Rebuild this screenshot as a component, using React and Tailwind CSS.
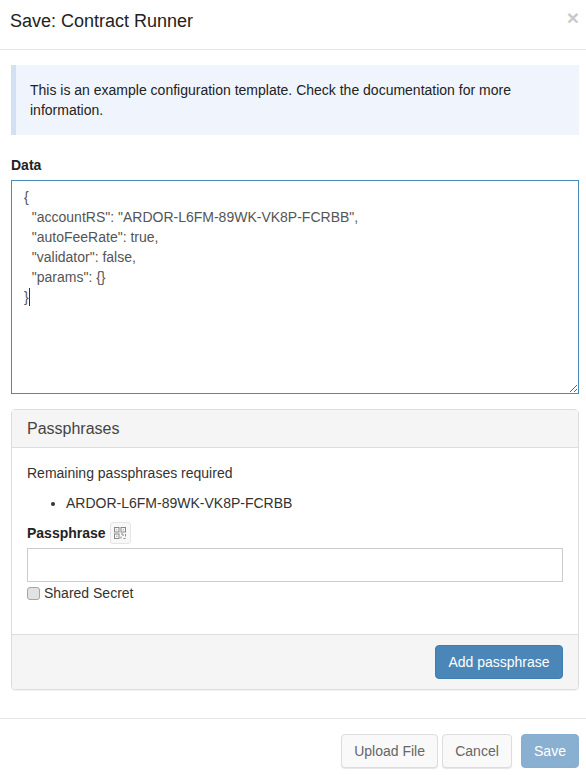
const template = `{
  "accountRS": "ARDOR-L6FM-89WK-VK8P-FCRBB",
  "autoFeeRate": true,
  "validator": false,
  "params": {}
}`;

// glyphicon style qr code, small squares plus a few data bits
function QrIcon() {
    return (
        <svg width="12" height="12" viewBox="0 0 12 12" className="text-[#888]" fill="none" stroke="currentColor">
            <rect x="0.5" y="0.5" width="4.5" height="4.5" />
            <rect x="7" y="0.5" width="4.5" height="4.5" />
            <rect x="0.5" y="7" width="4.5" height="4.5" />
            <path d="M7 7h2v2M7 9.5v2M9.5 11.5h2M11.5 7v2.5" />
            <path d="M2.25 2.75h1M8.75 2.75h1M2.25 9.25h1" />
        </svg>
    );
}

export default function App() {
    return (
        <div className="w-[586px] h-[775px] overflow-hidden bg-white font-['Liberation_Sans',Arial,sans-serif] text-sm leading-5 text-[#333]">
            <div className="relative h-[50px] border-b border-[#e5e5e5] pl-[10px] pt-[10px]">
                <h4 className="text-lg leading-[22px] text-[#222]">Save: Contract Runner</h4>
                <span className="absolute right-[7px] top-[7px] text-[21px] leading-[21px] font-bold text-[#c9c9c9]">×</span>
            </div>

            <div className="pl-[11px] pr-[7px] pt-[15px]">
                <div className="h-[70px] border-l-[5px] border-[#d2e1f2] bg-[#f0f5fd] pl-[14px] pr-[15px] pt-[15px] text-[#222]">
                    This is an example configuration template. Check the documentation for more information.
                </div>

                <label className="mt-[20px] mb-[5px] block h-5 font-bold text-[#222]">Data</label>
                <div className="relative h-[214px]">
                    <textarea
                        readOnly
                        defaultValue={template}
                        className="block h-[214px] w-full resize border border-[#4a8ab9] bg-white px-3 py-[6px] text-[#555] outline-none"
                    />
                    <span className="absolute left-[18px] top-[108px] h-[18px] w-px bg-[#333]" />
                </div>

                <div className="mt-[15px] h-[281px] rounded border border-[#ddd] shadow-[0_1px_1px_rgba(0,0,0,0.05)]">
                    <div className="h-[38px] border-b border-[#ddd] bg-[#f5f5f5] px-[15px] pt-[9px] text-base leading-5 text-[#444]">
                        Passphrases
                    </div>
                    <div className="h-[186px] px-[15px] pt-[15px]">
                        <p className="text-[#333]">Remaining passphrases required</p>
                        <ul className="mt-[10px] list-disc pl-[39px]">
                            <li>ARDOR-L6FM-89WK-VK8P-FCRBB</li>
                        </ul>
                        <div className="mt-[9px] flex h-[22px] items-center gap-[4px]">
                            <label className="font-bold text-[#222]">Passphrase</label>
                            <span className="flex h-[22px] w-[21px] items-center justify-center rounded-[3px] border border-[#e5e5e5] bg-[#f8f8f8]">
                                <QrIcon />
                            </span>
                        </div>
                        <input className="mt-[4px] block h-[34px] w-full border border-[#ccc] bg-white px-3" />
                        <label className="mt-[1px] flex h-5 items-center gap-[4px] text-[#333]">
                            <input type="checkbox" className="m-0 h-[13px] w-[13px] appearance-none rounded-[3px] border border-[#a6a6a6] bg-[#e2e2e2]" />
                            Shared Secret
                        </label>
                    </div>
                    <div className="flex h-[55px] items-start justify-end rounded-b border-t border-[#ddd] bg-[#f5f5f5] px-[15px] pt-[10px]">
                        <button className="h-[34px] w-[128px] rounded border border-[#3f7eaf] bg-[#4a87b8] text-white">Add passphrase</button>
                    </div>
                </div>
            </div>

            <div className="mt-[28px] flex justify-end gap-[4px] border-t border-[#e5e5e5] pr-[7px] pt-[15px]">
                <button className="h-[34px] rounded border border-[#ddd] bg-[#f9f9f9] px-3 text-[#666] shadow-[0_1px_1px_rgba(0,0,0,0.1)]">Upload File</button>
                <button className="h-[34px] w-[70px] rounded border border-[#ddd] bg-[#f9f9f9] text-[#666] shadow-[0_1px_1px_rgba(0,0,0,0.1)]">Cancel</button>
                <button className="ml-[5px] h-[34px] w-[58px] rounded border border-[#86aed0] bg-[#8ab0d1] text-white">Save</button>
            </div>
        </div>
    );
}
